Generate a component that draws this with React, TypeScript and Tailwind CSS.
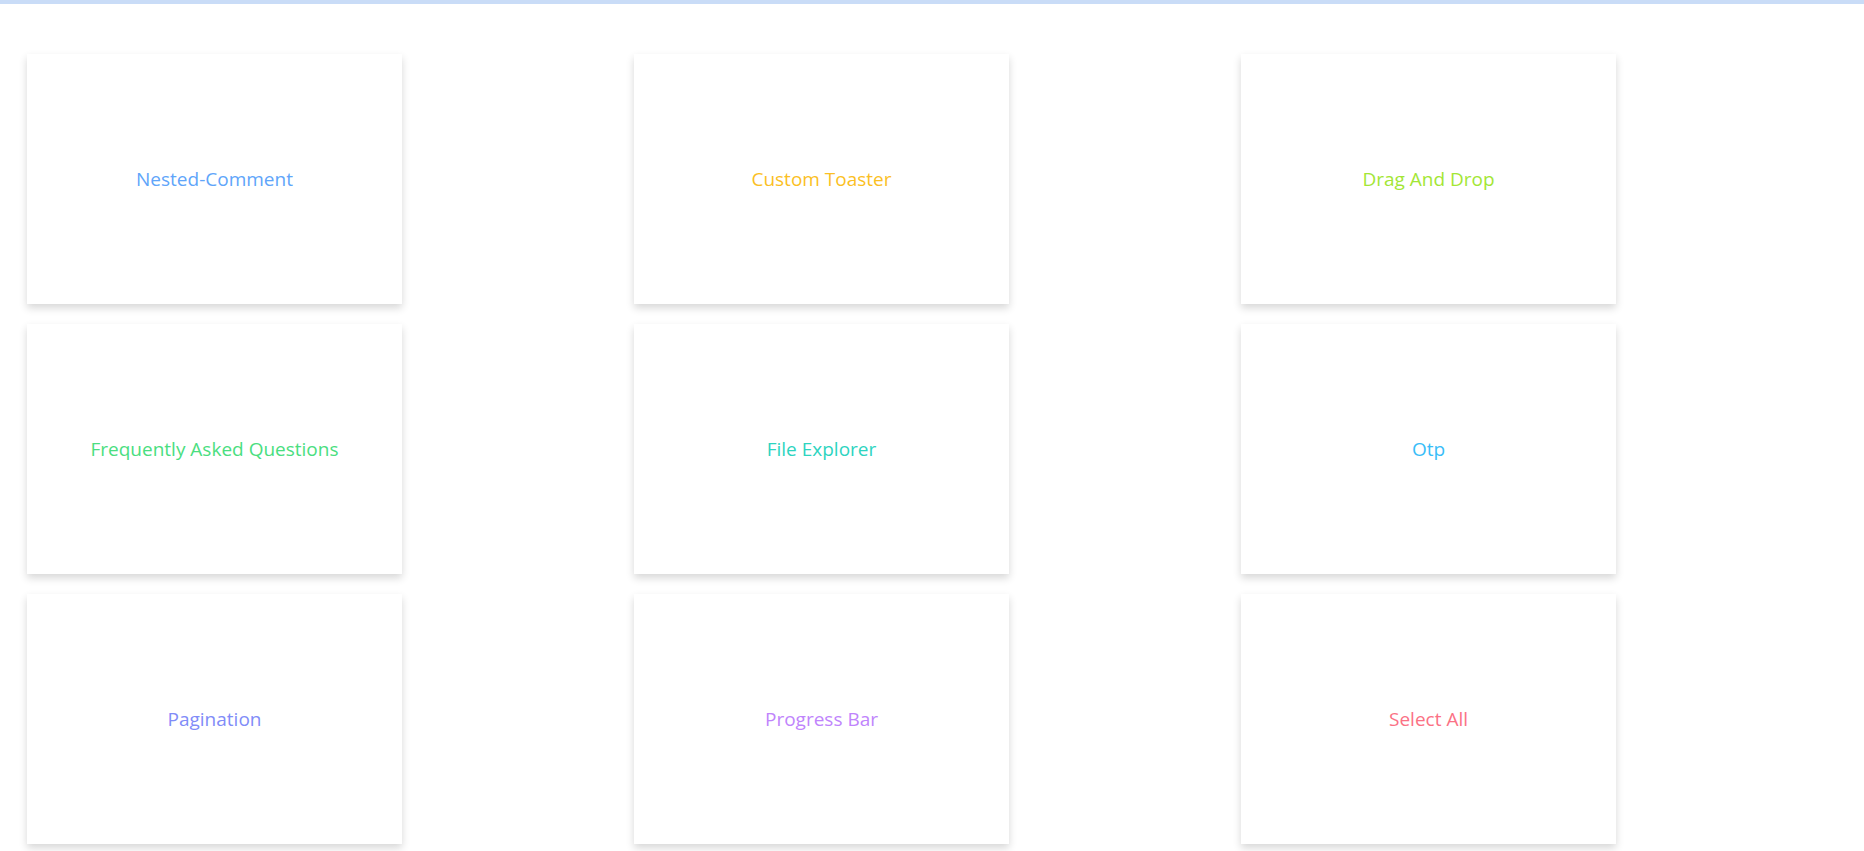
const projects = [
  { name: "Nested-Comment", color: "text-[#60a5fa]" },
  { name: "Custom Toaster", color: "text-[#fbbf24]" },
  { name: "Drag And Drop", color: "text-[#a3e635]" },
  { name: "Frequently Asked Questions", color: "text-[#4ade80]" },
  { name: "File Explorer", color: "text-[#2dd4bf]" },
  { name: "Otp", color: "text-[#38bdf8]" },
  { name: "Pagination", color: "text-[#818cf8]" },
  { name: "Progress Bar", color: "text-[#c084fc]" },
  { name: "Select All", color: "text-[#fb7185]" },
];

export default function App() {
  return (
    <div className="min-h-screen bg-white font-['Open_Sans','Noto_Sans',sans-serif]">
      {/* top accent bar */}
      <div className="h-[4px] bg-[#c9dcf7]" />

      <div className="grid grid-cols-[repeat(3,375px)] gap-x-[232px] gap-y-[20px] pl-[27px] pt-[50px]">
        {projects.map((p) => (
          <div
            key={p.name}
            className="flex h-[250px] w-[375px] items-center justify-center bg-white shadow-[0_4px_8px_0_rgba(0,0,0,0.16)]"
          >
            <span className={`text-[19px] ${p.color}`}>{p.name}</span>
          </div>
        ))}
      </div>
    </div>
  );
}
